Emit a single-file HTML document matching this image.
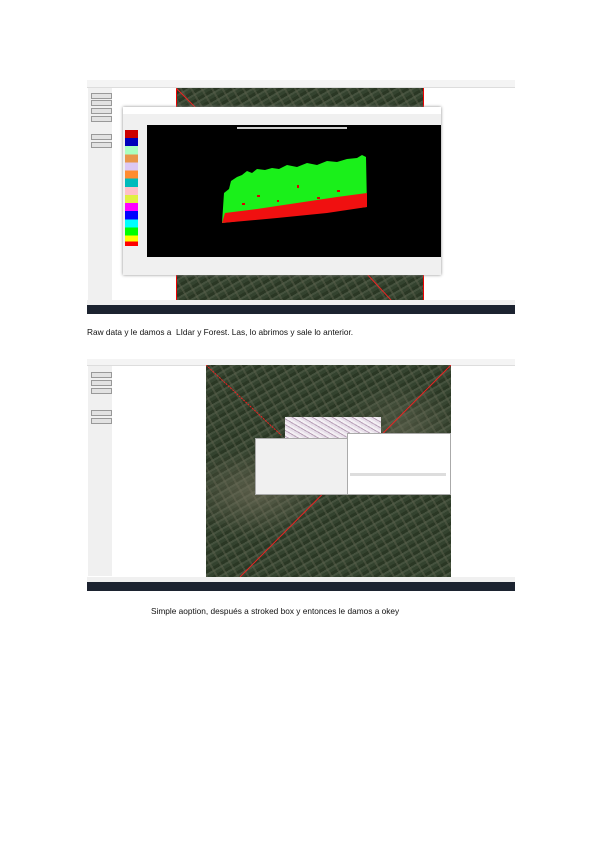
<!DOCTYPE html>
<html><head><style>
body{margin:0;width:600px;height:848px;background:#fff;position:relative;overflow:hidden;font-family:"Liberation Sans",sans-serif}
.a{position:absolute}
.map{background:
radial-gradient(ellipse at 20% 60%,rgba(120,115,95,.6) 0,transparent 25%),
radial-gradient(ellipse at 80% 30%,rgba(110,110,90,.5) 0,transparent 22%),
repeating-linear-gradient(60deg,rgba(90,95,75,.5) 0 2px,transparent 2px 9px),
repeating-linear-gradient(-30deg,#34432f 0 3px,#45523e 3px 5px,#2a3724 5px 8px)}
.tb{background:#1c2330}
.side{background:#f0f0f0}
.btn{position:absolute;width:19px;height:4px;background:#e2e2e2;border:1px solid #999}
.cap{font-size:8.3px;color:#111;white-space:nowrap}
</style></head><body>

<!-- Screenshot 1 -->
<div class="a" style="left:87px;top:80px;width:428px;height:7px;background:#f4f4f4;border-bottom:1px solid #ddd"></div>
<div class="a side" style="left:88px;top:88px;width:24px;height:212px"></div>
<div class="btn" style="left:91px;top:93px"></div><div class="btn" style="left:91px;top:100px"></div><div class="btn" style="left:91px;top:108px"></div><div class="btn" style="left:91px;top:116px"></div><div class="btn" style="left:91px;top:134px"></div><div class="btn" style="left:91px;top:142px"></div>
<div class="a map" style="left:176px;top:88px;width:246px;height:212px;border-left:1px solid #e00;border-right:1px solid #e00"></div>
<svg class="a" style="left:176px;top:88px" width="246" height="212"><line x1="0" y1="0" x2="20" y2="20" stroke="#e22"/><line x1="190" y1="185" x2="215" y2="212" stroke="#e22"/></svg>
<div class="a" style="left:87px;top:300px;width:428px;height:5px;background:#f0f0f0"></div>
<div class="a tb" style="left:87px;top:305px;width:428px;height:9px"></div>
<div class="a" style="left:123px;top:107px;width:318px;height:168px;background:#f0f0f0;box-shadow:0 0 3px #888"></div>
<div class="a" style="left:123px;top:107px;width:318px;height:7px;background:#fff"></div>
<div class="a" style="left:147px;top:125px;width:294px;height:132px;background:#000"></div>
<div class="a" style="left:125px;top:130px;width:13px;height:116px;background:linear-gradient(#c00 0 7%,#00b 7% 14%,#aaffc0 14% 21%,#e8964a 21% 28%,#dcc8f4 28% 35%,#ff8c30 35% 42%,#0bb 42% 49%,#ffc0c8 49% 56%,#e0f040 56% 63%,#f0f 63% 70%,#00f 70% 77%,#0ff 77% 84%,#0f0 84% 91%,#ff0 91% 96%,#f00 96%)"></div>
<svg class="a" style="left:147px;top:125px" width="294" height="132">
<polygon points="75,98 77,68 82,64 84,56 90,52 95,50 100,46 105,48 110,44 118,45 125,43 132,44 140,40 150,42 160,38 170,40 180,36 190,37 200,34 210,33 215,30 219,32 220,82" fill="#1af01a"/>
<polygon points="75,98 78,88 110,84 150,78 190,72 220,68 220,82 180,88 130,93" fill="#f01010"/>
<g fill="#d00"><rect x="110" y="70" width="3" height="2"/><rect x="150" y="60" width="2" height="3"/><rect x="190" y="65" width="3" height="2"/><rect x="130" y="75" width="2" height="2"/><rect x="95" y="78" width="3" height="2"/><rect x="170" y="72" width="3" height="2"/></g>
<rect x="90" y="2" width="110" height="2" fill="#ccc"/>
</svg>

<div class="a cap" style="left:87px;top:327px">Raw data y le damos a &nbsp;LIdar y Forest. Las, lo abrimos y sale lo anterior.</div>

<!-- Screenshot 2 -->
<div class="a" style="left:87px;top:359px;width:428px;height:6px;background:#f4f4f4;border-bottom:1px solid #ddd"></div>
<div class="a side" style="left:88px;top:366px;width:24px;height:210px"></div>
<div class="btn" style="left:91px;top:372px"></div><div class="btn" style="left:91px;top:380px"></div><div class="btn" style="left:91px;top:388px"></div><div class="btn" style="left:91px;top:410px"></div><div class="btn" style="left:91px;top:418px"></div>
<div class="a map" style="left:206px;top:365px;width:245px;height:212px"></div>
<svg class="a" style="left:206px;top:365px" width="245" height="212"><line x1="0" y1="0" x2="75" y2="70" stroke="#e22" stroke-dasharray="2 1"/><line x1="245" y1="0" x2="34" y2="212" stroke="#e22"/></svg>
<div class="a" style="left:285px;top:417px;width:96px;height:22px;background:repeating-linear-gradient(30deg,#e8e0ea 0 2px,#b8a0b8 2px 3px,#f4f0f4 3px 5px)"></div>
<div class="a" style="left:255px;top:438px;width:92px;height:55px;background:#f0f0f0;border:1px solid #aaa"></div>
<div class="a" style="left:347px;top:433px;width:102px;height:60px;background:#fff;border:1px solid #aaa"></div>
<div class="a" style="left:350px;top:473px;width:96px;height:3px;background:#ddd"></div>
<div class="a" style="left:87px;top:577px;width:428px;height:5px;background:#f0f0f0"></div>
<div class="a tb" style="left:87px;top:582px;width:428px;height:9px"></div>

<div class="a cap" style="left:151px;top:606px">Simple aoption, después a stroked box y entonces le damos a okey</div>
</body></html>
